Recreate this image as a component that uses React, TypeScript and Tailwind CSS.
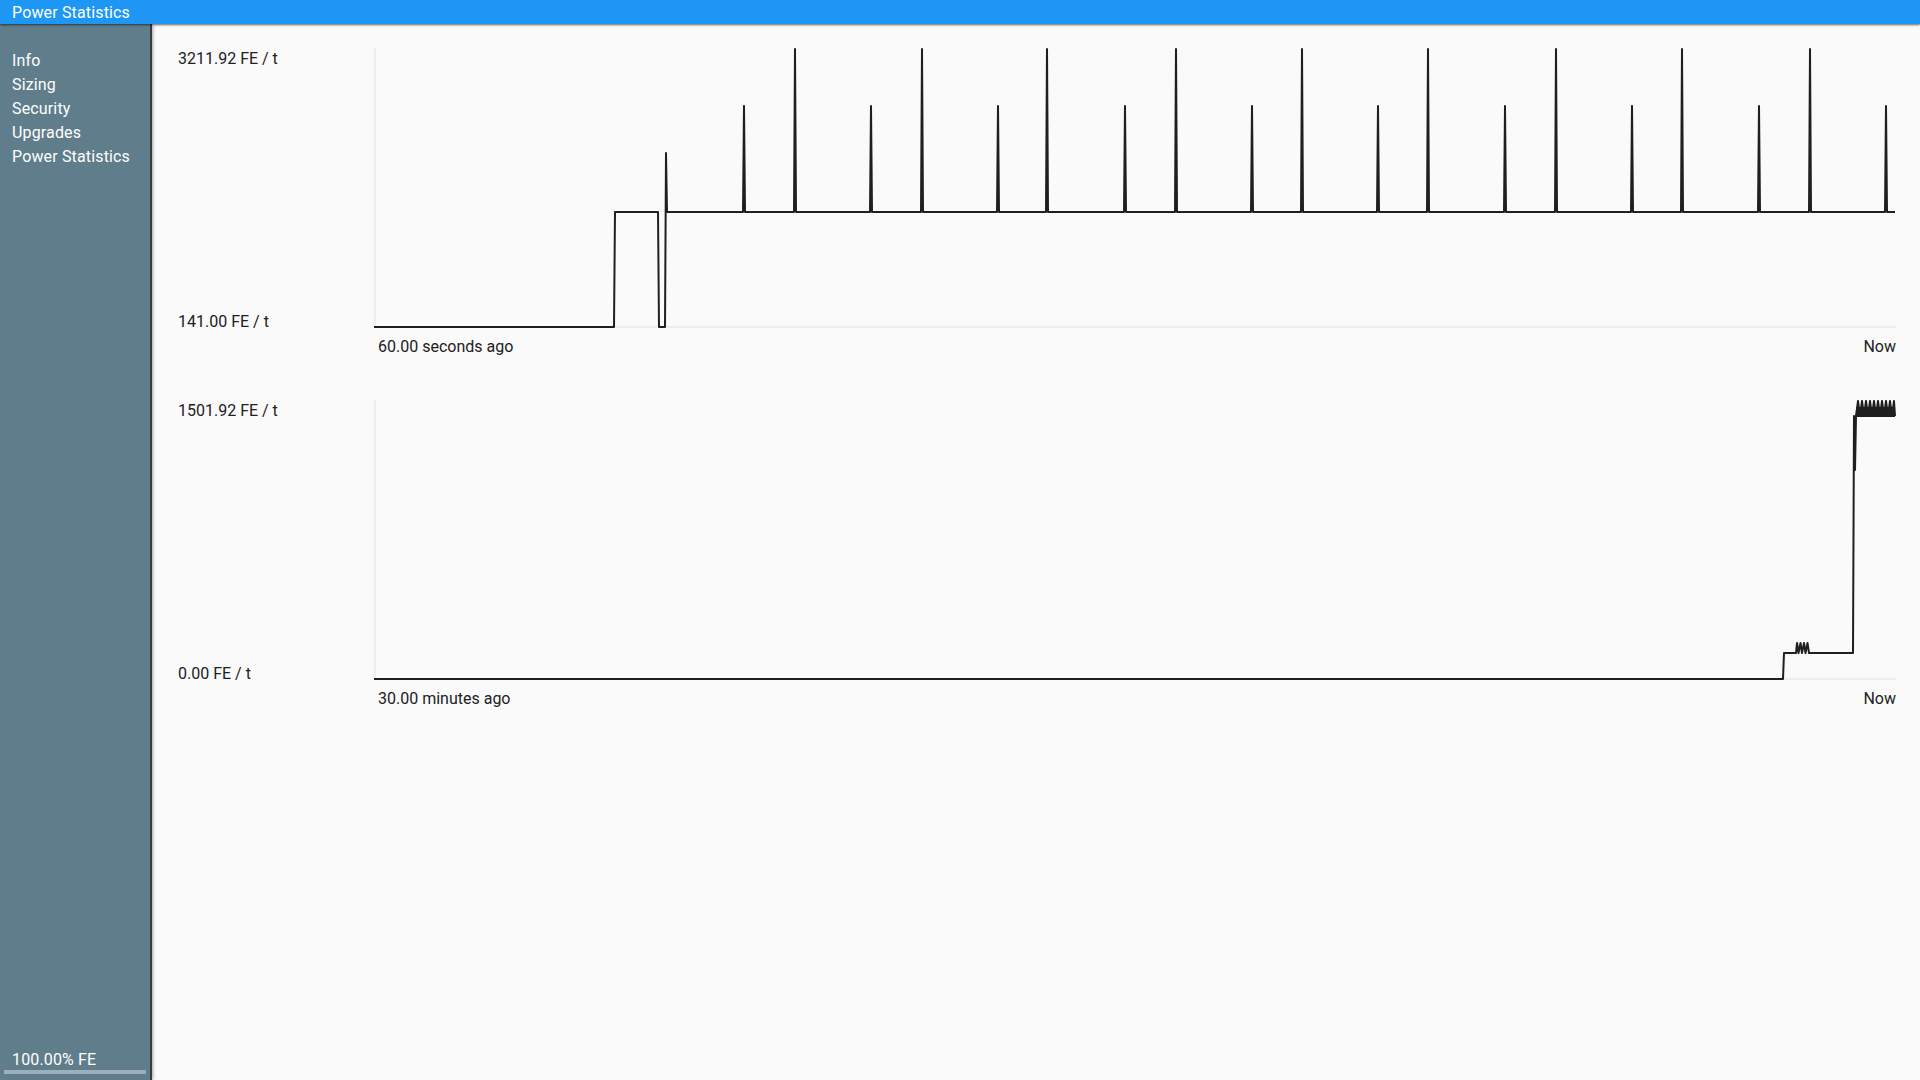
import React from "react";

const shortSpikes = [370, 497, 624, 751, 878, 1004, 1131, 1258, 1385, 1512];
const tallSpikes = [421, 548, 673, 802, 928, 1054, 1182, 1308, 1436];

function chart1Path(): string {
  const pts: string[] = [
    "M0,279",
    "L240,279",
    "L241,164",
    "L284,164",
    "L285,279",
    "L291,279",
    "L292,105",
    "L293,164",
  ];
  const spikes = [
    ...shortSpikes.map((x) => ({ x, top: 58 })),
    ...tallSpikes.map((x) => ({ x, top: 1 })),
  ].sort((a, b) => a.x - b.x);
  for (const s of spikes) {
    pts.push(`L${s.x - 1},164`, `L${s.x},${s.top}`, `L${s.x + 1},164`);
  }
  pts.push("L1521,164");
  return pts.join(" ");
}

function chart2Path(): string {
  const pts: string[] = ["M0,279", "L1409,279", "L1410,253", "L1422,253"];
  for (const x of [1423, 1426.5, 1430, 1433.5]) {
    pts.push(`L${x},243`, `L${x + 1.5},253`);
  }
  pts.push("L1479,253", "L1480,16", "L1481,70", "L1482,16");
  let up = true;
  for (let x = 1484; x <= 1521; x += 2) {
    pts.push(`L${x},${up ? 1 : 16}`);
    up = !up;
  }
  pts.push("L1521,16");
  return pts.join(" ");
}

function Chart({ d, band }: { d: string; band?: boolean }) {
  return (
    <svg width={1522} height={280} viewBox="0 0 1522 280" className="block shrink-0">
      <line x1={1} y1={0} x2={1} y2={280} stroke="#eeeeee" strokeWidth={2} />
      <line x1={0} y1={279} x2={1522} y2={279} stroke="#eeeeee" strokeWidth={2} />
      {band && <rect x={1482} y={7} width={39} height={10} fill="#1f1f1f" />}
      <path d={d} fill="none" stroke="#1f1f1f" strokeWidth={2} strokeLinejoin="round" />
    </svg>
  );
}

function Section({
  top,
  bottom,
  left,
  d,
  band,
  className,
}: {
  top: string;
  bottom: string;
  left: string;
  d: string;
  band?: boolean;
  className?: string;
}) {
  return (
    <div className={className}>
      <div className="flex">
        <div className="w-[196px] shrink-0 h-[283px] mt-px flex flex-col justify-between leading-5">
          <span>{top}</span>
          <span>{bottom}</span>
        </div>
        <Chart d={d} band={band} />
      </div>
      <div className="ml-[196px] w-[1522px] pl-1 mt-[5px] flex justify-between leading-5">
        <span>{left}</span>
        <span>Now</span>
      </div>
    </div>
  );
}

export default function App() {
  return (
    <div
      className="w-screen h-screen flex flex-col overflow-hidden text-base text-[#212121]"
      style={{ fontFamily: "Roboto, 'Noto Sans', sans-serif" }}
    >
      <div className="h-6 shrink-0 bg-[#1e96f3] text-white px-3 pt-px leading-[23px] tracking-[0.15px] relative z-10 shadow-[0_1px_2px_rgba(0,0,0,0.6)]">
        Power Statistics
      </div>
      <div className="flex flex-1 min-h-0">
        <aside className="w-[152px] shrink-0 bg-[#607d8b] border-r-2 border-[#3a3a3a] flex flex-col justify-between text-white tracking-[0.15px] relative z-[5] shadow-[1px_0_3px_rgba(0,0,0,0.35)]">
          <nav className="pt-[25px] px-3 flex flex-col leading-6">
            <span>Info</span>
            <span>Sizing</span>
            <span>Security</span>
            <span>Upgrades</span>
            <span>Power Statistics</span>
          </nav>
          <div className="pb-[6px]">
            <div className="px-3 leading-5">100.00% FE</div>
            <div className="mx-1 h-1 bg-[#9db0ba]" />
          </div>
        </aside>
        <main className="flex-1 bg-[#fafafa] pl-[26px] pt-6 pr-6">
          <Section
            top="3211.92 FE / t"
            bottom="141.00 FE / t"
            left="60.00 seconds ago"
            d={chart1Path()}
          />
          <Section
            className="mt-[43px]"
            top="1501.92 FE / t"
            bottom="0.00 FE / t"
            left="30.00 minutes ago"
            d={chart2Path()}
            band
          />
        </main>
      </div>
    </div>
  );
}
